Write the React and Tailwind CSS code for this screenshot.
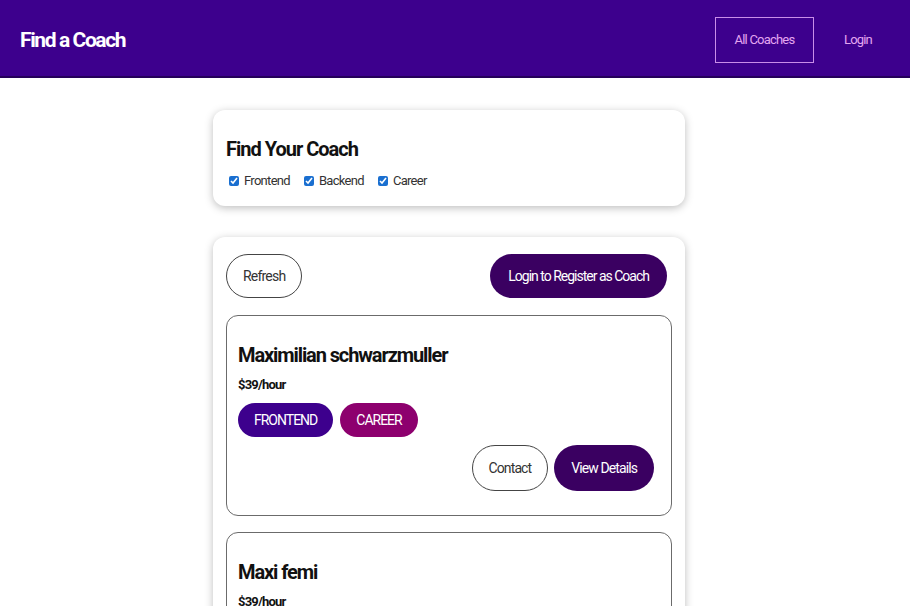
const coaches = [
  {
    id: "c1",
    name: "Maximilian schwarzmuller",
    rate: 39,
    areas: ["frontend", "career"],
  },
  {
    id: "c2",
    name: "Maxi femi",
    rate: 39,
    areas: ["frontend", "backend"],
  },
];

const badgeColors = {
  frontend: "bg-[#3d008d]",
  backend: "bg-[#71008d]",
  career: "bg-[#8d006e]",
};

function Badge({ area }) {
  return (
    <span
      className={`inline-flex h-[34px] items-center rounded-full px-[16px] text-[14px] uppercase tracking-[-1px] text-white ${badgeColors[area]}`}
    >
      {area}
    </span>
  );
}

function CoachItem({ coach }) {
  return (
    <li className="rounded-[12px] border border-[#6b6b6b] px-[11px] pt-[25px] pb-[24px]">
      <h3 className="text-[20px] font-bold leading-[28px] tracking-[-1.1px] text-[#111]">{coach.name}</h3>
      <h4 className="mt-[7px] text-[13px] font-bold leading-[18px] tracking-[-0.8px] text-[#111]">
        ${coach.rate}/hour
      </h4>
      <div className="mt-[9px] flex gap-[7px]">
        {coach.areas.map((a) => (
          <Badge key={a} area={a} />
        ))}
      </div>
      <div className="mt-[8px] flex justify-end gap-[6px] pr-[6px]">
        <button className="h-[46px] rounded-full border border-[#444] px-[16px] text-[14px] tracking-[-0.9px] text-[#333]">
          Contact
        </button>
        <button className="h-[46px] rounded-full bg-[#3a0061] px-[17px] text-[14px] tracking-[-0.9px] text-white">
          View Details
        </button>
      </div>
    </li>
  );
}

export default function App() {
  return (
    <div className="min-h-[606px] bg-white font-['Roboto',sans-serif] text-[#222]">
      <header className="flex h-[78px] items-center justify-between border-b-2 border-[#25005a] bg-[#3d008d] pl-[20px] pr-[38px]">
        <h1 className="pt-[5px] text-[21px] font-bold tracking-[-1.4px] text-white">Find a Coach</h1>
        <nav className="mt-[3px] flex items-center gap-[30px]">
          <a className="flex h-[46px] w-[99px] items-center justify-center border border-[#c98ee8] text-[13px] tracking-[-0.8px] text-[#e3a6f0]">
            All Coaches
          </a>
          <a className="text-[13px] tracking-[-0.8px] text-[#e3a6f0]">Login</a>
        </nav>
      </header>

      <div className="w-[898px]">
        <section className="mx-auto mt-[32px] h-[96px] w-[472px] rounded-[12px] bg-white px-[13px] pt-[26px] shadow-[0_2px_8px_rgba(0,0,0,0.26)]">
          <h2 className="text-[20px] font-bold leading-[26px] tracking-[-1px] text-[#111]">Find Your Coach</h2>
          <div className="mt-[9px] flex items-center gap-[14px] pl-[3px] text-[13px] tracking-[-0.7px] text-[#333]">
            {["Frontend", "Backend", "Career"].map((f) => (
              <label key={f} className="flex items-center gap-[5px]">
                <input type="checkbox" checked readOnly className="h-[10px] w-[10px] accent-[#1a6fd0]" />
                {f}
              </label>
            ))}
          </div>
        </section>

        <section className="mx-auto mt-[31px] w-[472px] rounded-[12px] bg-white px-[13px] pt-[17px] shadow-[0_2px_8px_rgba(0,0,0,0.26)]">
          <div className="flex items-center justify-between pr-[5px]">
            <button className="h-[44px] rounded-full border border-[#444] px-[16px] text-[14px] tracking-[-0.8px] text-[#333]">
              Refresh
            </button>
            <button className="h-[44px] rounded-full bg-[#3a0061] px-[18px] text-[14px] tracking-[-1px] text-white">
              Login to Register as Coach
            </button>
          </div>
          <ul className="mt-[17px] flex flex-col gap-[16px] pb-[16px]">
            {coaches.map((c) => (
              <CoachItem key={c.id} coach={c} />
            ))}
          </ul>
        </section>
      </div>
    </div>
  );
}
